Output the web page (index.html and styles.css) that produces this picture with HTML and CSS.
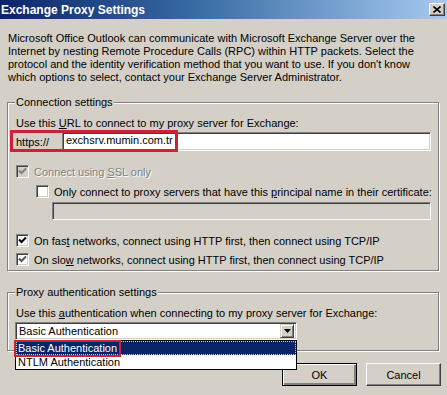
FILE: index.html
```html
<!DOCTYPE html>
<html lang="en">
<head>
    <meta charset="UTF-8">
    <title>Exchange Proxy Settings</title>
    <link rel="stylesheet" href="styles.css">
</head>
<body>
    <div class="window">
        <div class="titlebar">
            <span class="title">Exchange Proxy Settings</span>
            <span class="close-btn">
                <svg width="8" height="7" viewBox="0 0 8 7"><path d="M0.5 0.5 L7.5 6.5 M7.5 0.5 L0.5 6.5" stroke="#000" stroke-width="1.6"/></svg>
            </span>
        </div>

        <p class="intro">Microsoft Office Outlook can communicate with Microsoft Exchange Server over the<br>Internet by nesting Remote Procedure Calls (RPC) within HTTP packets. Select the<br>protocol and the identity verification method that you want to use. If you don't know<br>which options to select, contact your Exchange Server Administrator.</p>

        <fieldset class="group">
            <legend>Connection settings</legend>
            <div class="label">Use this <u>U</u>RL to connect to my proxy server for Exchange:</div>
            <div class="url-row">
                <span class="prefix">https://</span>
                <span class="textbox">exchsrv.mumin.com.tr</span>
                <span class="mark mark-url"></span>
            </div>
            <div class="check-row disabled">
                <span class="checkbox checked"><svg width="9" height="9" viewBox="0 0 9 9"><path d="M1 3.5 L3.5 6 L8 1.5" fill="none" stroke="#808080" stroke-width="2"/></svg></span>
                <span>Connect using <u>S</u>SL only</span>
            </div>
            <div class="check-row indent">
                <span class="checkbox"></span>
                <span>Only connect to proxy servers that have this <u>p</u>rincipal name in their certificate:</span>
            </div>
            <div class="textbox principal"></div>
            <div class="check-row gap-lg">
                <span class="checkbox checked"><svg width="9" height="9" viewBox="0 0 9 9"><path d="M1 3.5 L3.5 6 L8 1.5" fill="none" stroke="#000" stroke-width="2"/></svg></span>
                <span>On fas<u>t</u> networks, connect using HTTP first, then connect using TCP/IP</span>
            </div>
            <div class="check-row gap-sm">
                <span class="checkbox checked"><svg width="9" height="9" viewBox="0 0 9 9"><path d="M1 3.5 L3.5 6 L8 1.5" fill="none" stroke="#555" stroke-width="2"/></svg></span>
                <span>On slo<u>w</u> networks, connect using HTTP first, then connect using TCP/IP</span>
            </div>
        </fieldset>

        <fieldset class="group auth">
            <legend>Proxy authentication settings</legend>
            <div class="label">Use this <u>a</u>uthentication when connecting to my proxy server for Exchange:</div>
            <div class="select-wrap">
                <div class="select">
                    <span>Basic Authentication</span>
                    <span class="arrow-btn"><svg width="7" height="4" viewBox="0 0 7 4"><path d="M0 0 H7 L3.5 4 Z" fill="#000"/></svg></span>
                </div>
                <ul class="dropdown">
                    <li class="selected">Basic Authentication</li>
                    <li>NTLM Authentication</li>
                    <span class="mark mark-item"></span>
                </ul>
            </div>
        </fieldset>

        <div class="buttons">
            <button class="btn default">OK</button>
            <button class="btn">Cancel</button>
        </div>
    </div>
</body>
</html>
```

FILE: styles.css
```css
body {
    margin: 0;
    background: #fff;
}
.window {
    width: 447px;
    height: 395px;
    overflow: hidden;
    background: #d4d0c8;
    font-family: "Liberation Sans", Arial, sans-serif;
    font-size: 11px;
    color: #000;
}
.titlebar {
    height: 19px;
    display: flex;
    align-items: center;
    justify-content: space-between;
    padding: 0 2px 0 1px;
    background: linear-gradient(to right, #0a246a, #3a6ea5 45%, #a6caf0);
}
.title {
    color: #fff;
    font-weight: bold;
    font-size: 12px;
}
.close-btn {
    width: 16px;
    height: 13px;
    box-sizing: border-box;
    display: flex;
    align-items: center;
    justify-content: center;
    background: #d4d0c8;
    border: 1px solid;
    border-color: #fff #404040 #404040 #fff;
    box-shadow: inset -1px -1px #808080;
}
.intro {
    margin: 13px 0 0 8px;
    line-height: 13px;
    white-space: nowrap;
}
.group {
    margin: 12px 0 0 7px;
    width: 432px;
    box-sizing: border-box;
    min-width: 0;
    border: 1px solid #808080;
    box-shadow: inset 1px 1px #fff, 1px 1px #fff;
    padding: 8px 7px 3px 8px;
}
.group legend {
    margin-left: -1px;
    padding: 0 1px;
    line-height: 13px;
    background: #d4d0c8;
}
.label {
    line-height: 13px;
    white-space: nowrap;
}
.url-row {
    position: relative;
    display: flex;
    align-items: center;
    margin-top: 2px;
}
.prefix {
    width: 46px;
}
.textbox {
    flex: 1;
    height: 19px;
    box-sizing: border-box;
    padding: 0 3px;
    line-height: 15px;
    background: #fff;
    border: 1px solid;
    border-color: #808080 #fff #fff #808080;
    box-shadow: inset 1px 1px #404040, inset -1px -1px #d4d0c8;
}
.textbox.principal {
    margin: 3px 0 0 36px;
    height: 18px;
    background: #d4d0c8;
}
.check-row {
    display: flex;
    align-items: center;
    gap: 5px;
    height: 15px;
    margin-top: 13px;
    white-space: nowrap;
}
.check-row.indent {
    margin-top: 5px;
    padding-left: 20px;
}
.check-row.gap-lg {
    margin-top: 13px;
}
.check-row.gap-sm {
    margin-top: 4px;
}
.check-row.disabled {
    color: #808080;
    text-shadow: 1px 1px #fff;
}
.checkbox {
    width: 13px;
    height: 13px;
    box-sizing: border-box;
    flex: none;
    display: flex;
    align-items: center;
    justify-content: center;
    background: #fff;
    border: 1px solid;
    border-color: #808080 #fff #fff #808080;
    box-shadow: inset 1px 1px #404040, inset -1px -1px #d4d0c8;
}
.disabled .checkbox {
    background: #d4d0c8;
}
.mark {
    position: absolute;
    box-sizing: border-box;
    border: 3px solid #cc2233;
}
.mark-url {
    left: -6px;
    top: -2px;
    width: 168px;
    height: 22px;
}
.auth {
    margin-top: 15px;
    padding-bottom: 10px;
}
.select-wrap {
    position: relative;
    margin: 2px 0 0 -1px;
    width: 282px;
}
.select {
    height: 18px;
    box-sizing: border-box;
    display: flex;
    align-items: center;
    justify-content: space-between;
    padding: 0 2px 0 3px;
    background: #fff;
    border: 1px solid;
    border-color: #808080 #fff #fff #808080;
    box-shadow: inset 1px 1px #404040, inset -1px -1px #d4d0c8;
}
.arrow-btn {
    width: 14px;
    height: 14px;
    box-sizing: border-box;
    display: flex;
    align-items: center;
    justify-content: center;
    background: #d4d0c8;
    border: 1px solid;
    border-color: #d4d0c8 #404040 #404040 #d4d0c8;
    box-shadow: inset 1px 1px #fff, inset -1px -1px #808080;
}
.dropdown {
    position: absolute;
    top: 100%;
    left: 0;
    width: 100%;
    box-sizing: border-box;
    margin: 0;
    padding: 0;
    list-style: none;
    background: #fff;
    border: 1px solid #000;
}
.dropdown li {
    height: 14px;
    line-height: 14px;
    padding-left: 2px;
}
.dropdown li.selected {
    background: #0a246a;
    color: #fff;
    outline: 1px dotted #d4d0c8;
    outline-offset: -1px;
}
.mark-item {
    left: -2px;
    top: -1px;
    width: 107px;
    height: 17px;
    border-width: 2px;
}
.buttons {
    display: flex;
    justify-content: flex-end;
    gap: 9px;
    margin-top: 12px;
    padding-right: 6px;
}
.btn {
    width: 75px;
    height: 23px;
    font-family: inherit;
    font-size: 11px;
    color: #000;
    background: #d4d0c8;
    border: 1px solid;
    border-color: #fff #404040 #404040 #fff;
    box-shadow: inset -1px -1px #808080;
    padding: 0;
}
.btn.default {
    border: 1px solid #000;
    box-shadow: inset 1px 1px #fff, inset -2px -2px #808080, inset -1px -1px #404040;
}
```
